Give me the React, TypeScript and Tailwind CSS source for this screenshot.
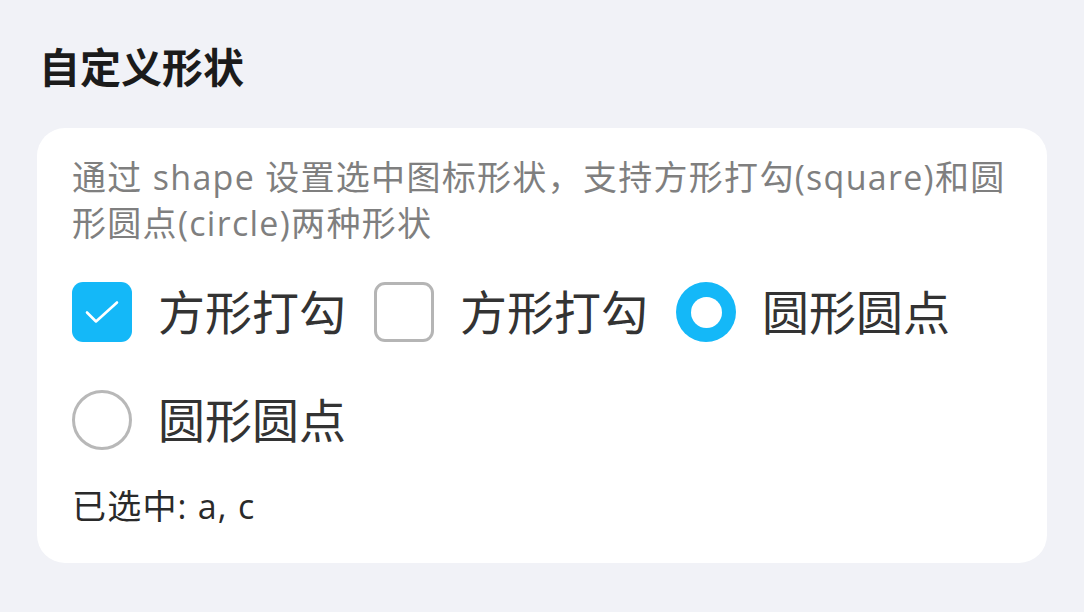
import React from "react";

const font = { fontFamily: '"Open Sans", "Noto Sans CJK SC", "Noto Sans", sans-serif' };

function CheckBox({ checked }: { checked: boolean }) {
  if (checked) {
    return (
      <div className="w-[60px] h-[60px] rounded-[11px] bg-[#14b8f8] flex items-center justify-center shrink-0">
        <svg width="60" height="60" viewBox="0 0 60 60">
          <path d="M15 30.5 L24 39.5 L45 20.5" fill="none" stroke="#ffffff" strokeWidth="2.6" strokeLinecap="round" strokeLinejoin="round" />
        </svg>
      </div>
    );
  }
  return <div className="w-[60px] h-[60px] rounded-[11px] border-[3px] border-[#b5b5b5] bg-white shrink-0" />;
}

function Radio({ checked }: { checked: boolean }) {
  if (checked) {
    return (
      <div className="w-[60px] h-[60px] rounded-full bg-[#14b8f8] flex items-center justify-center shrink-0">
        <div className="w-[31px] h-[31px] rounded-full bg-white" />
      </div>
    );
  }
  return <div className="w-[60px] h-[60px] rounded-full border-[3px] border-[#b8b8b8] bg-white shrink-0" />;
}

function Item({ children, label }: { children: React.ReactNode; label: string }) {
  return (
    <div className="flex items-center gap-[26px] h-[60px]">
      {children}
      <span className="text-[47px] leading-[60px] text-[#333333]">{label}</span>
    </div>
  );
}

export default function App() {
  return (
    <div className="w-[1084px] h-[612px] bg-[#f1f2f7] overflow-hidden" style={font}>
      <div className="pl-[39px] pt-[44px] h-[128px]">
        <h1 className="text-[41px] leading-[46px] font-bold text-[#1b1b1b]">自定义形状</h1>
      </div>
      <div className="mx-[37px] w-[1010px] h-[435px] bg-white rounded-[28px] pl-[35px] pr-[4px] pt-[26px]">
        <p className="text-[34px] leading-[46px] tracking-[1.3px] text-[#7f7f7f] whitespace-nowrap">
          通过 shape 设置选中图标形状，支持方形打勾(square)和圆
          <br />
          形圆点(circle)两种形状
        </p>
        <div className="mt-[36px] flex flex-wrap gap-x-[28px] gap-y-[48px] w-[900px]">
          <Item label="方形打勾">
            <CheckBox checked />
          </Item>
          <Item label="方形打勾">
            <CheckBox checked={false} />
          </Item>
          <Item label="圆形圆点">
            <Radio checked />
          </Item>
          <Item label="圆形圆点">
            <Radio checked={false} />
          </Item>
        </div>
        <div className="mt-[35px] text-[34px] leading-[42px] tracking-[1.2px] text-[#2a2a2a]">已选中: a, c</div>
      </div>
    </div>
  );
}
